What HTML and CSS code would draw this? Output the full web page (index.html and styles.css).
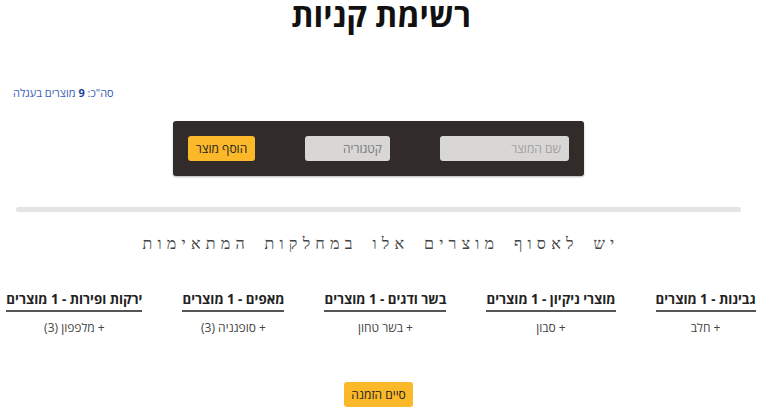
FILE: index.html
```html
<!DOCTYPE html>
<html lang="he" dir="rtl">
<head>
<meta charset="utf-8">
<link rel="stylesheet" href="styles.css">
</head>
<body>
<h1 class="title">רשימת קניות</h1>
<div class="total">סה"כ: <b>9</b> מוצרים בעגלה</div>
<div class="form-wrap">
  <div class="form">
    <div class="field name">שם המוצר</div>
    <div class="field cat">קטגוריה</div>
    <button class="btn add">הוסף מוצר</button>
  </div>
</div>
<div class="bar"></div>
<h2 class="sub">יש לאסוף מוצרים אלו במחלקות המתאימות</h2>
<div class="cols">
  <div class="col"><div class="col-h">גבינות - 1 מוצרים</div><div class="item">+ חלב</div></div>
  <div class="col"><div class="col-h">מוצרי ניקיון - 1 מוצרים</div><div class="item">+ סבון</div></div>
  <div class="col"><div class="col-h">בשר ודגים - 1 מוצרים</div><div class="item">+ בשר טחון</div></div>
  <div class="col"><div class="col-h">מאפים - 1 מוצרים</div><div class="item">+ סופגניה (3)</div></div>
  <div class="col"><div class="col-h">ירקות ופירות - 1 מוצרים</div><div class="item">+ מלפפון (3)</div></div>
</div>
<div class="finish-wrap"><button class="btn finish">סיים הזמנה</button></div>
</body>
</html>
```
FILE: styles.css
```css
html, body { margin: 0; padding: 0; background: #fff; }
body { font-family: "Open Sans", "Liberation Sans", Arial, sans-serif; color: #222; width: 762px; }
.title { margin: -5px 0 0; text-align: center; font-size: 32px; font-weight: bold; color: #111; line-height: 40px; }
.total { margin-top: 51px; text-align: left; padding-left: 13px; direction: rtl; font-size: 11px; color: #3c5cb8; line-height: 14px; }
.total b { color: #1f3f9a; }
.form-wrap { display: flex; justify-content: center; margin-top: 21px; }
.form { width: 411px; height: 55px; margin-right: 5px; background: #312c2a; border-radius: 3px; display: flex; align-items: center; padding: 0 15px; box-sizing: border-box; justify-content: space-between; box-shadow: 0 1px 2px rgba(0,0,0,.3); }
.field { background: #d8d7d6; border-radius: 3px; color: #8a8a8a; font-size: 12px; height: 25px; line-height: 25px; padding: 0 8px; box-sizing: border-box; }
.field.name { width: 129px; color: #a0a0a0; }
.field.cat { width: 85px; margin-right: auto; margin-left: 50px; color: #777; }
.btn { font-family: inherit; border: none; background: #fbb829; border-radius: 3px; font-size: 12px; color: #222; font-weight: normal; white-space: nowrap; padding: 0; }
.btn.add { width: 67px; height: 25px; }
.bar { margin: 31px 21px 0 16px; height: 5px; background: #e4e4e6; border-radius: 3px; }
.sub { margin: 22px 0 0; text-align: center; font-family: "DejaVu Sans Mono", monospace; font-weight: normal; font-size: 16px; letter-spacing: 5.2px; color: #444; line-height: 20px; }
.cols { display: flex; justify-content: center; gap: 40px; margin-top: 37px; }
.col { display: flex; flex-direction: column; align-items: center; }
.col-h { font-weight: bold; font-size: 13.3px; color: #222; border-bottom: 2px solid #555; padding-bottom: 2px; line-height: 17px; white-space: nowrap; }
.item { font-size: 12px; color: #444; margin-top: 9px; line-height: 14px; }
.finish-wrap { display: flex; justify-content: center; margin-top: 47px; }
.btn.finish { width: 69px; height: 25px; margin-right: 5px; }
```
